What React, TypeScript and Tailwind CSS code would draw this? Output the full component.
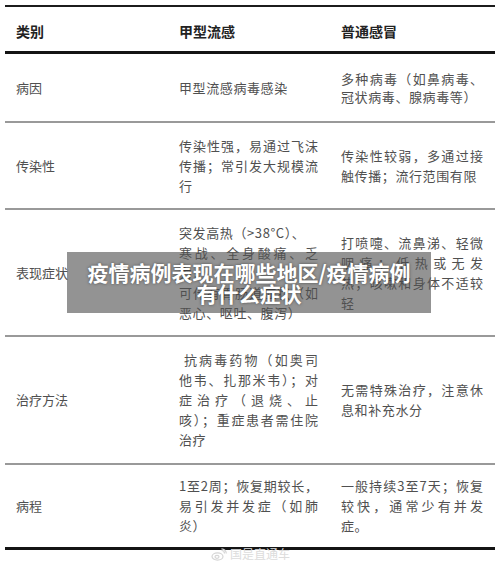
import React from "react";

type Cell = { lines: string[]; indent?: boolean; tight?: boolean; loose?: number[] };

const rows: { label: string; h: string; a: Cell; b: Cell }[] = [
  {
    label: "病因",
    h: "h-[69px]",
    a: { lines: ["甲型流感病毒感染"] },
    b: { lines: ["多种病毒（如鼻病毒、", "冠状病毒、腺病毒等）"], tight: true },
  },
  {
    label: "传染性",
    h: "h-[87px]",
    a: { lines: ["传染性强，易通过飞沫", "传播；常引发大规模流", "行"] },
    b: { lines: ["传染性较弱，多通过接", "触传播；流行范围有限"] },
  },
  {
    label: "表现症状",
    h: "h-[127px]",
    a: {
      lines: ["突发高热（>38°C）、", "寒战、全身酸痛、乏", "力；", "可伴有胃肠道症状（如", "恶心、呕吐、腹泻）"],
      loose: [0],
    },
    b: { lines: ["打喷嚏、流鼻涕、轻微", "咽痛；低热或无发", "热；咳嗽和身体不适较", "轻"] },
  },
  {
    label: "治疗方法",
    h: "h-[128px]",
    a: { lines: ["抗病毒药物（如奥司", "他韦、扎那米韦）；对", "症治疗（退烧、止", "咳）；重症患者需住院", "治疗"], indent: true },
    b: { lines: ["无需特殊治疗，注意休", "息和补充水分"] },
  },
  {
    label: "病程",
    h: "h-[85px]",
    a: { lines: ["1至2周；恢复期较长，", "易引发并发症（如肺", "炎）"] },
    b: { lines: ["一般持续3至7天；恢复", "较快，通常少有并发", "症。"] },
  },
];

function Lines({ cell }: { cell: Cell }) {
  const last = cell.lines.length - 1;
  return (
    <div className={cell.tight ? "leading-[18px]" : "leading-[20px]"}>
      {cell.lines.map((l, i) => {
        const full = i < last && l.length > 3 && !(cell.loose ?? []).includes(i);
        return (
          <div
            key={i}
            className={`${full ? "text-justify [text-align-last:justify]" : "tracking-[0.6px]"} ${
              cell.indent && i === 0 ? "pl-[5px]" : ""
            }`}
          >
            {l}
          </div>
        );
      })}
    </div>
  );
}

export default function App() {
  const font = { fontFamily: '"Noto Sans CJK SC", "Noto Sans", sans-serif' };
  return (
    <div className="relative w-[500px] h-[566px] bg-white pt-[5px] px-[5px] overflow-hidden" style={font}>
      <div className="border-t-2 border-[#1c1c1c]">
        <div className="grid grid-cols-[163px_162px_1fr] h-[47px] items-center border-b-[3px] border-[#141414] text-[14px] font-bold text-[#222] pt-[4px]">
          <div className="pl-[11px]">类别</div>
          <div className="pl-[11px]">甲型流感</div>
          <div className="pl-[11px]">普通感冒</div>
        </div>
        {rows.map((r, i) => (
          <div
            key={r.label}
            className={`grid grid-cols-[163px_162px_1fr] ${r.h} items-center text-[13px] text-[#505050] ${
              i === rows.length - 1 ? "border-b-[3px] border-[#141414]" : "border-b-2 border-[#999]"
            }`}
          >
            <div className="pl-[11px]">{r.label}</div>
            <div className="pl-[11px] pr-[12px]">
              <Lines cell={r.a} />
            </div>
            <div className="pl-[11px] pr-[12px]">
              <Lines cell={r.b} />
            </div>
          </div>
        ))}
      </div>

      <div className="absolute left-[67px] top-[252px] w-[364px] h-[61px] bg-[rgba(80,80,80,0.62)] flex flex-col items-center justify-center text-white font-bold text-[21px] leading-[21px] [text-shadow:0_0_3px_rgba(0,0,0,0.5)]">
        <div>疫情病例表现在哪些地区/疫情病例</div>
        <div>有什么症状</div>
      </div>

      <div className="absolute left-[211px] top-[545px] flex items-center gap-[3px] text-[12px] text-[#dcdcdc]">
        <svg width="16" height="13" viewBox="0 0 16 13" fill="none" stroke="#d6d6d6" strokeWidth="1.2">
          <ellipse cx="6.5" cy="8.5" rx="5.5" ry="3.6" />
          <ellipse cx="6" cy="8.8" rx="2" ry="1.5" />
          <path d="M10.5 2.5a3 3 0 0 1 3 3" />
          <path d="M10.5 0.8a4.8 4.8 0 0 1 4.8 4.8" />
        </svg>
        <span>国是直通车</span>
      </div>
    </div>
  );
}
